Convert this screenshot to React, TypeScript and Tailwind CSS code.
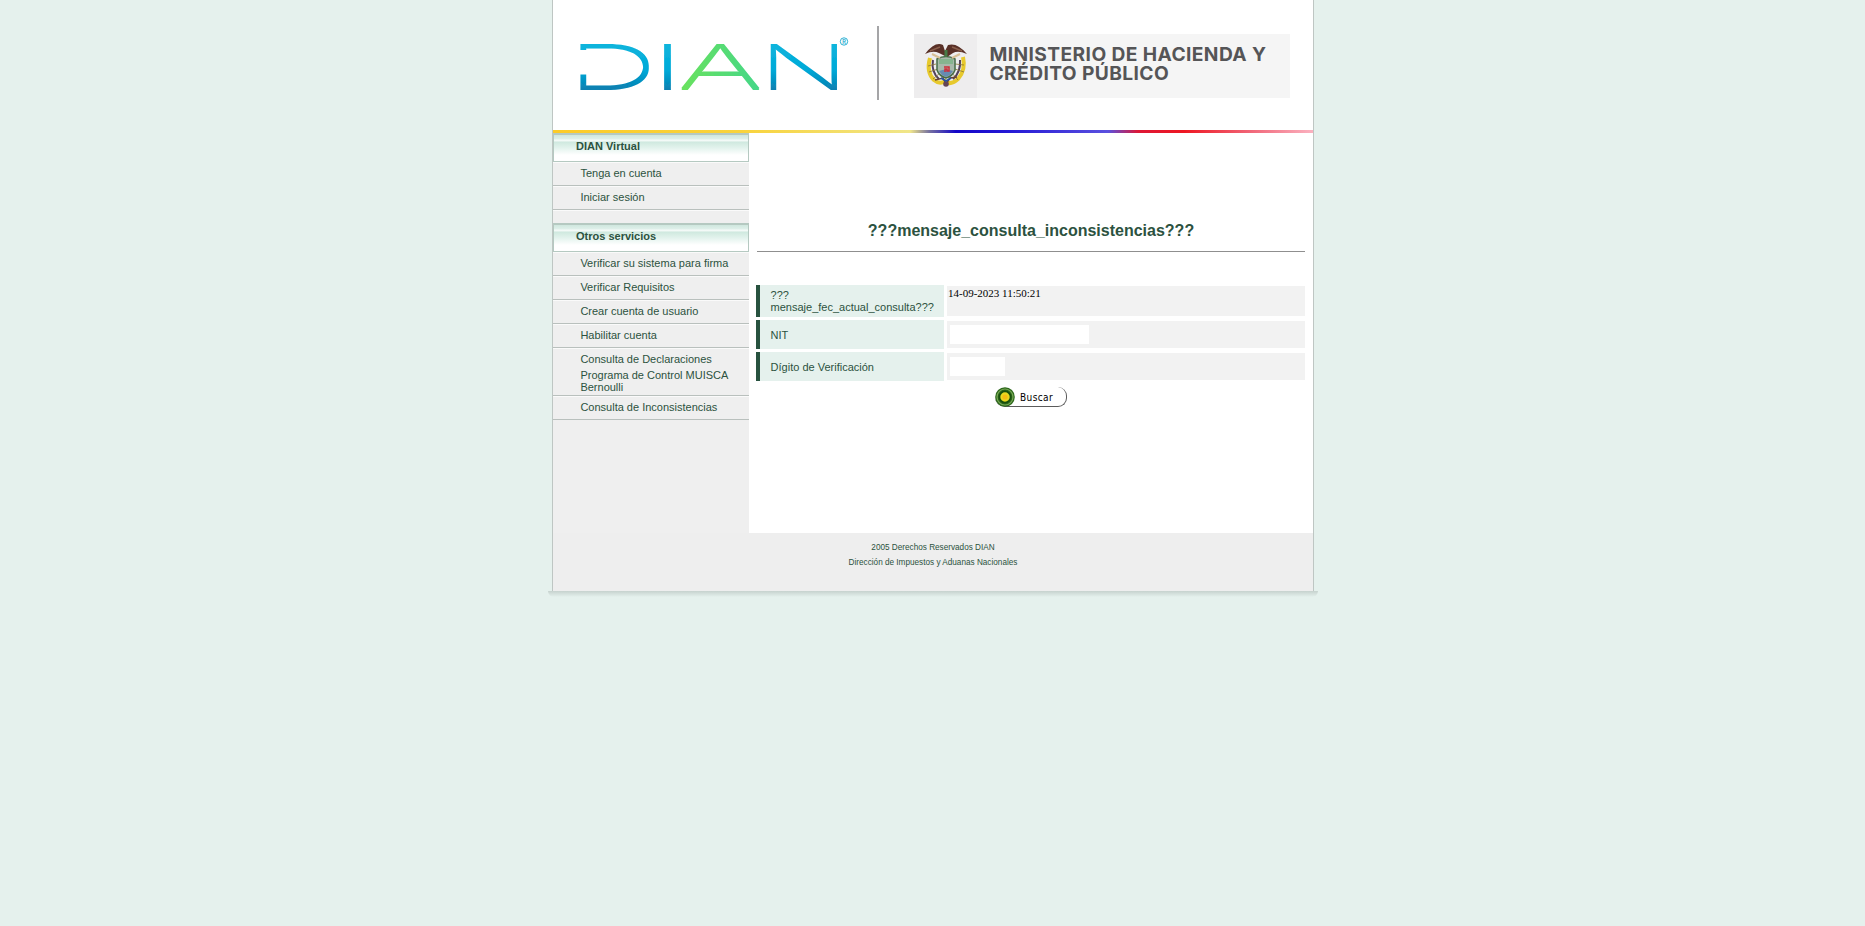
const dianLinks = ['Tenga en cuenta', 'Iniciar sesión'];
const serviceLinks = ['Verificar su sistema para firma', 'Verificar Requisitos', 'Crear cuenta de usuario', 'Habilitar cuenta'];

function DianLogo() {
  return (
    <svg width="272" height="56" viewBox="578 36 272 56" className="block overflow-visible" fontFamily="Inter, sans-serif" fontWeight="250">
      <defs>
        <filter id="thicken" x="-10%" y="-10%" width="120%" height="120%">
          <feMorphology operator="dilate" radius="0 1" />
        </filter>
        <linearGradient id="blueText" x1="0" y1="-44" x2="0" y2="0" gradientUnits="userSpaceOnUse">
          <stop offset="0" stopColor="#0cb4dc" />
          <stop offset="0.55" stopColor="#00a9d8" />
          <stop offset="1" stopColor="#087fb0" />
        </linearGradient>
        <linearGradient id="green" x1="0" y1="0" x2="42" y2="0" gradientUnits="userSpaceOnUse">
          <stop offset="0" stopColor="#6be25c" />
          <stop offset="1" stopColor="#40d58c" />
        </linearGradient>
      </defs>
      <g fontSize="60.5" filter="url(#thicken)">
        <text transform="translate(567.2 89) scale(2.08 1)" fill="url(#blueText)">D</text>
        <text transform="translate(657.7 89) scale(1.2 1)" fontWeight="400" fill="url(#blueText)">I</text>
        <text transform="translate(677.5 89) scale(2.16 1)" fill="url(#green)">A</text>
        <text transform="translate(758.2 89) scale(1.97 1)" fill="url(#blueText)">N</text>
      </g>
      <rect x="576" y="50" width="15" height="24.5" fill="#fff" />
      <circle cx="844" cy="41.5" r="3.7" fill="none" stroke="#17a8ce" strokeWidth="0.9" />
      <text x="842.2" y="43.7" fontSize="5.5" fontWeight="600" fill="#17a8ce">R</text>
    </svg>
  );
}

function Shield() {
  return (
    <svg width="63" height="64" viewBox="0 0 63 64" className="block shrink-0 bg-[#eeedee]">
      <path d="M16 24Q12 38 20 46Q26 51 31 47Q36 52 44 45Q52 36 49 23" fill="none" stroke="#e7c92d" strokeWidth="4" />
      <path d="M19 26Q17 38 25 45M46 26Q47 38 39 45" fill="none" stroke="#52405b" strokeWidth="2" />
      <path d="M14 32L22 30M15 38L24 35M19 45L26 39M50 31L41 30M50 38L41 35M44 46L38 39" stroke="#8a7434" strokeWidth="0.8" />
      <path d="M23 25Q32 20 41 25V36Q39 42 32 44Q25 42 23 36Z" fill="#a9b9ab" stroke="#456c48" strokeWidth="1.5" />
      <path d="M25 25H39V30H25Z" fill="#86b58f" />
      <path d="M25 37Q32 34 39 37L36 41L32 43L28 41Z" fill="#668bb1" />
      <path d="M30 33H35V37H33V35H31V38" fill="none" stroke="#d12c39" strokeWidth="1.5" />
      <path d="M11 20Q21 7 29 11L31 17L34 11Q43 8 53 20Q44 16 39 19L33 23L25 19Q19 16 11 20Z" fill="#593027" />
      <path d="M16 17L26 13M38 13L48 17" stroke="#8c604d" strokeWidth="1.4" />
      <path d="M18 20L26 24M38 24L46 20" stroke="#d8bf96" strokeWidth="2" />
      <path d="M32 16V23" stroke="#477a46" strokeWidth="3" />
      <path d="M21 46L29 44L32 50L36 44L43 43" fill="none" stroke="#684534" strokeWidth="1.5" />
      <circle cx="32" cy="50" r="2.8" fill="#654554" />
      <path d="M27 44L32 47L37 44" fill="none" stroke="#2652a4" strokeWidth="1.8" />
    </svg>
  );
}

function Heading({ children }: { children: string }) {
  return (
    <h2 className="h-[29px] border border-t-2 border-[#b5c9c1] bg-[linear-gradient(#cfe7de_0px,#dff0ea_4px,#f6fbf9_5px,#f0f8f5_6px,#cfe9df_7px,#e3f3ed_13px,#fff_20px)] pl-[22px] text-[11px] font-bold leading-[22px] text-[#2c5240]">
      {children}
    </h2>
  );
}

function Item({ children }: { children: string }) {
  return (
    <a className="block h-6 border-b border-t border-b-[#b9c0bd] border-t-[#fafafa] pl-[27.4px] text-[11px] leading-5 text-[#2c5240]">
      {children}
    </a>
  );
}

function Row({ label, height, children }: { label: string; height: string; children: React.ReactNode }) {
  return (
    <div className={`flex gap-[3px] ${height}`}>
      <div className="flex w-[188px] items-center border-l-4 border-[#28523f] bg-[#e5f1ed] pl-[10.6px] text-[11px] leading-3 text-[#2c5240]">
        <span className="w-[165px]">{label}</span>
      </div>
      <div className="my-px w-[358px] bg-[#f2f2f2]">{children}</div>
    </div>
  );
}

export default function App() {
  return (
    <div className="flex min-h-screen items-start justify-center bg-[#e5f1ed] pl-px font-['Liberation_Sans',Arial,sans-serif]">
      <div className="w-[772px]">
        <div className="mx-[5px] w-[762px] border-x border-[#bec6c3] bg-white">
          <header className="flex h-[130px] items-start">
            <div className="ml-[25px] mt-9"><DianLogo /></div>
            <div className="ml-[27px] mt-[26px] h-[74px] w-[2px] bg-[#a5a5a7]" />
            <div className="ml-[35px] mt-[34px] flex h-16 w-[376px] bg-[#f5f5f5]">
              <Shield />
              <div className="whitespace-nowrap pl-[12.5px] pt-[11px] font-['Inter',sans-serif] text-[19.2px] font-bold leading-[19px] tracking-[0.4px] text-[#555557]">
                <p>MINISTERIO DE HACIENDA Y</p>
                <p>CRÉDITO PÚBLICO</p>
              </div>
            </div>
          </header>
          <div className="h-[3px] bg-[linear-gradient(90deg,#fccb28_0%,#f9d33c_25%,#f0e68a_47%,#7772a0_49.5%,#1305c8_53%,#2419d6_60%,#5a50df_73%,#dd1735_77%,#ee1722_83%,#f1687a_92%,#fbb2c0_100%)]" />
          <div className="flex h-[400px]">
            <nav className="w-[196px] bg-[#efefef]">
              <Heading>DIAN Virtual</Heading>
              {dianLinks.map((l) => <Item key={l}>{l}</Item>)}
              <div className="h-[13px] border-t border-[#fafafa]" />
              <Heading>Otros servicios</Heading>
              {serviceLinks.map((l) => <Item key={l}>{l}</Item>)}
              <div className="h-12 border-b border-t border-b-[#b9c0bd] border-t-[#fafafa] pl-[27.4px] text-[11px] text-[#2c5240]">
                <a className="block leading-5">Consulta de Declaraciones</a>
                <a className="block leading-3">Programa de Control MUISCA Bernoulli</a>
              </div>
              <Item>Consulta de Inconsistencias</Item>
            </nav>
            <main className="w-[564px] pl-[7px] pr-2">
              <h1 className="pl-px pt-[88px] text-center text-[16px] font-bold leading-5 text-[#2c5240]">???mensaje_consulta_inconsistencias???</h1>
              <div className="ml-px mt-[10px] h-px bg-[#8f8f8f]" />
              <div className="mt-[33px] flex flex-col gap-[3px]">
                <Row label="??? mensaje_fec_actual_consulta???" height="h-8">
                  <span className="block pl-px font-['Liberation_Serif',serif] text-[11px] leading-[14px] text-black">14-09-2023 11:50:21</span>
                </Row>
                <Row label="NIT" height="h-[29px]">
                  <input className="ml-[3px] mt-1 block h-[19px] w-[139px] bg-white" />
                </Row>
                <Row label="Dígito de Verificación" height="h-[29px]">
                  <input className="ml-[3px] mt-1 block h-[19px] w-[55px] bg-white" />
                </Row>
              </div>
              <button className="ml-[239px] mt-[6px] flex h-5 w-[72px] items-center rounded-r-[9px] rounded-l-[10px] border-b-[1.5px] border-r-[1.5px] border-[#5b5b5b] bg-white">
                <svg width="20" height="20" viewBox="0 0 20 20" className="mt-px shrink-0">
                  <circle cx="10" cy="10" r="9.8" fill="#2d681c" />
                  <circle cx="10" cy="10" r="8" fill="none" stroke="#79a956" strokeWidth="1.2" />
                  <circle cx="10" cy="10" r="5.6" fill="#e8d820" stroke="#174f0c" strokeWidth="1.8" />
                  <circle cx="10" cy="10" r="2.6" fill="#f6bd13" />
                </svg>
                <span className="pl-[5px] pt-[2px] font-['DejaVu_Sans_Condensed','DejaVu_Sans',sans-serif] text-[10px] leading-none tracking-[0.4px] text-black">Buscar</span>
              </button>
            </main>
          </div>
          <footer className="h-[58px] bg-[#eeeeee] pt-[7px] text-center text-[8.2px] leading-[15px] text-[#2c5240]">
            <p>2005 Derechos Reservados DIAN</p>
            <p>Dirección de Impuestos y Aduanas Nacionales</p>
          </footer>
        </div>
        <div className="mx-px h-[6px] rounded-b-md bg-[linear-gradient(#c6d2ce,#e5f1ed)]" />
      </div>
    </div>
  );
}
